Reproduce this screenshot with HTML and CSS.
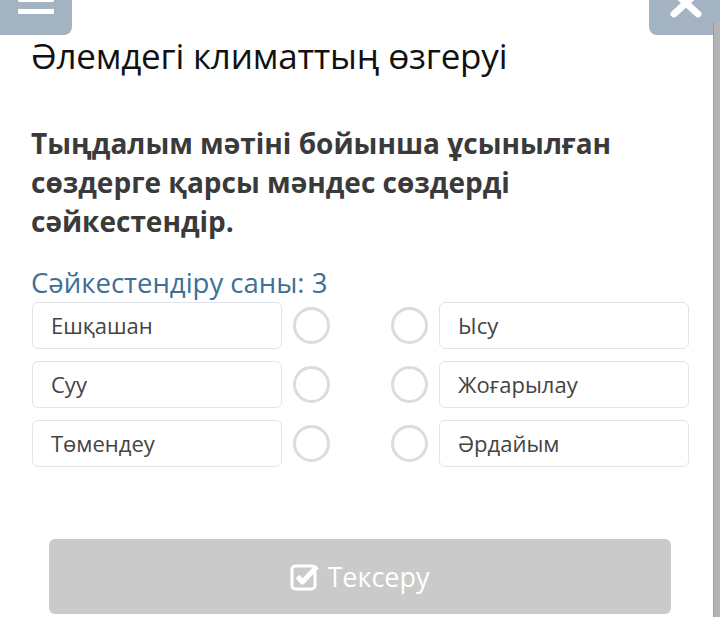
FILE: index.html
```html
<!DOCTYPE html>
<html lang="kk">
<head>
  <meta charset="UTF-8" />
  <meta name="viewport" content="width=device-width, initial-scale=1.0"/>
  <title>Әлемдегі климаттың өзгеруі</title>
  <link rel="stylesheet" href="styles.css">
</head>
<body>
  <div class="topbar">
    <button class="menu-btn" aria-label="Мәзір">
      <svg width="72" height="35" viewBox="0 0 72 35">
        <rect x="18" y="-4" width="36" height="6" rx="1" fill="#fff"/>
        <rect x="18" y="9" width="36" height="5" rx="1" fill="#fff"/>
      </svg>
    </button>
    <button class="close-btn" aria-label="Жабу">
      <svg width="71" height="35" viewBox="0 0 71 35">
        <path d="M25 -8 L49 14 M49 -8 L25 14" stroke="#fff" stroke-width="7" stroke-linecap="round"/>
      </svg>
    </button>
  </div>

  <div class="scrollbar"></div>

  <main class="content">
    <h1 class="title">Әлемдегі климаттың өзгеруі</h1>

    <p class="question">Тыңдалым мәтіні бойынша ұсынылған сөздерге қарсы мәндес сөздерді сәйкестендір.</p>

    <div class="count">Сәйкестендіру саны: 3</div>

    <div class="match">
      <div class="row">
        <div class="item">Ешқашан</div>
        <span class="dot"></span>
        <span class="dot right"></span>
        <div class="item">Ысу</div>
      </div>
      <div class="row">
        <div class="item">Суу</div>
        <span class="dot"></span>
        <span class="dot right"></span>
        <div class="item">Жоғарылау</div>
      </div>
      <div class="row">
        <div class="item">Төмендеу</div>
        <span class="dot"></span>
        <span class="dot right"></span>
        <div class="item">Әрдайым</div>
      </div>
    </div>

    <button class="check-btn" disabled>
      <svg width="30" height="30" viewBox="0 0 30 30">
        <rect x="2" y="4" width="23" height="23" rx="3.5" fill="none" stroke="#fff" stroke-width="3"/>
        <path d="M7.5 14.5 L12.5 20 L27 4.5" fill="none" stroke="#fff" stroke-width="5" stroke-linejoin="round"/>
      </svg>
      <span>Тексеру</span>
    </button>
  </main>
</body>
</html>
```

FILE: styles.css
```css
:root {
  --nav: #a4b3c1;
  --text: #333;
  --item-text: #444;
  --blue: #3f6f98;
  --border: #e1e4e8;
  --dot: #dcdcdc;
  --btn: #cacaca;
}
* { box-sizing: border-box; }
body {
  margin: 0;
  background: #fff;
  font-family: "Open Sans", "Noto Sans", sans-serif;
  color: var(--text);
  position: relative;
  height: 617px;
  overflow: hidden;
}
.topbar {
  display: flex; justify-content: space-between;
  height: 35px;
}
.topbar button {
  border: 0; padding: 0; margin: 0;
  background: var(--nav);
  height: 35px;
  display: block;
}
.topbar svg { display: block; }
.menu-btn { width: 72px; border-bottom-right-radius: 8px; }
.close-btn { width: 71px; border-bottom-left-radius: 8px; }

.scrollbar {
  position: absolute; top: 22px; right: 0;
  width: 7px; height: 595px;
  background: #b4b4b4;
  border-left: 1px solid #9d9d9d;
}

.content { padding: 0 31px; }
.title {
  margin: 0;
  font-size: 35px; font-weight: 400; line-height: 42px;
  color: #111;
  letter-spacing: -0.2px;
}
.question {
  margin: 47px 0 0;
  font-size: 28px; font-weight: 700; line-height: 39px;
  color: #3a3a3a;
  max-width: 620px;
}
.count {
  margin-top: 24px;
  font-size: 27.5px; line-height: 36px;
  color: var(--blue);
}
.match {
  display: flex; flex-direction: column; gap: 12px;
  margin-top: 1px;
  width: 658px;
}
.row {
  display: flex; align-items: center;
  margin-left: 1px;
}
.item {
  width: 250px; height: 47px;
  border: 1.5px solid var(--border);
  border-radius: 6px;
  padding: 0 18px;
  font-size: 22px; line-height: 44px;
  color: var(--item-text);
}
.dot {
  width: 37px; height: 37px;
  border: 3px solid var(--dot);
  border-radius: 50%;
  margin-left: 11px;
}
.dot.right { margin-left: auto; margin-right: 11px; }
.check-btn {
  display: flex; align-items: center; justify-content: center; gap: 7px;
  width: 622px; height: 75px;
  margin: 72px 0 0 18px;
  border: 0; border-radius: 6px;
  background: var(--btn);
  color: #fff;
  font-family: inherit; font-size: 27px;
}
.check-btn svg { display: block; }
```
